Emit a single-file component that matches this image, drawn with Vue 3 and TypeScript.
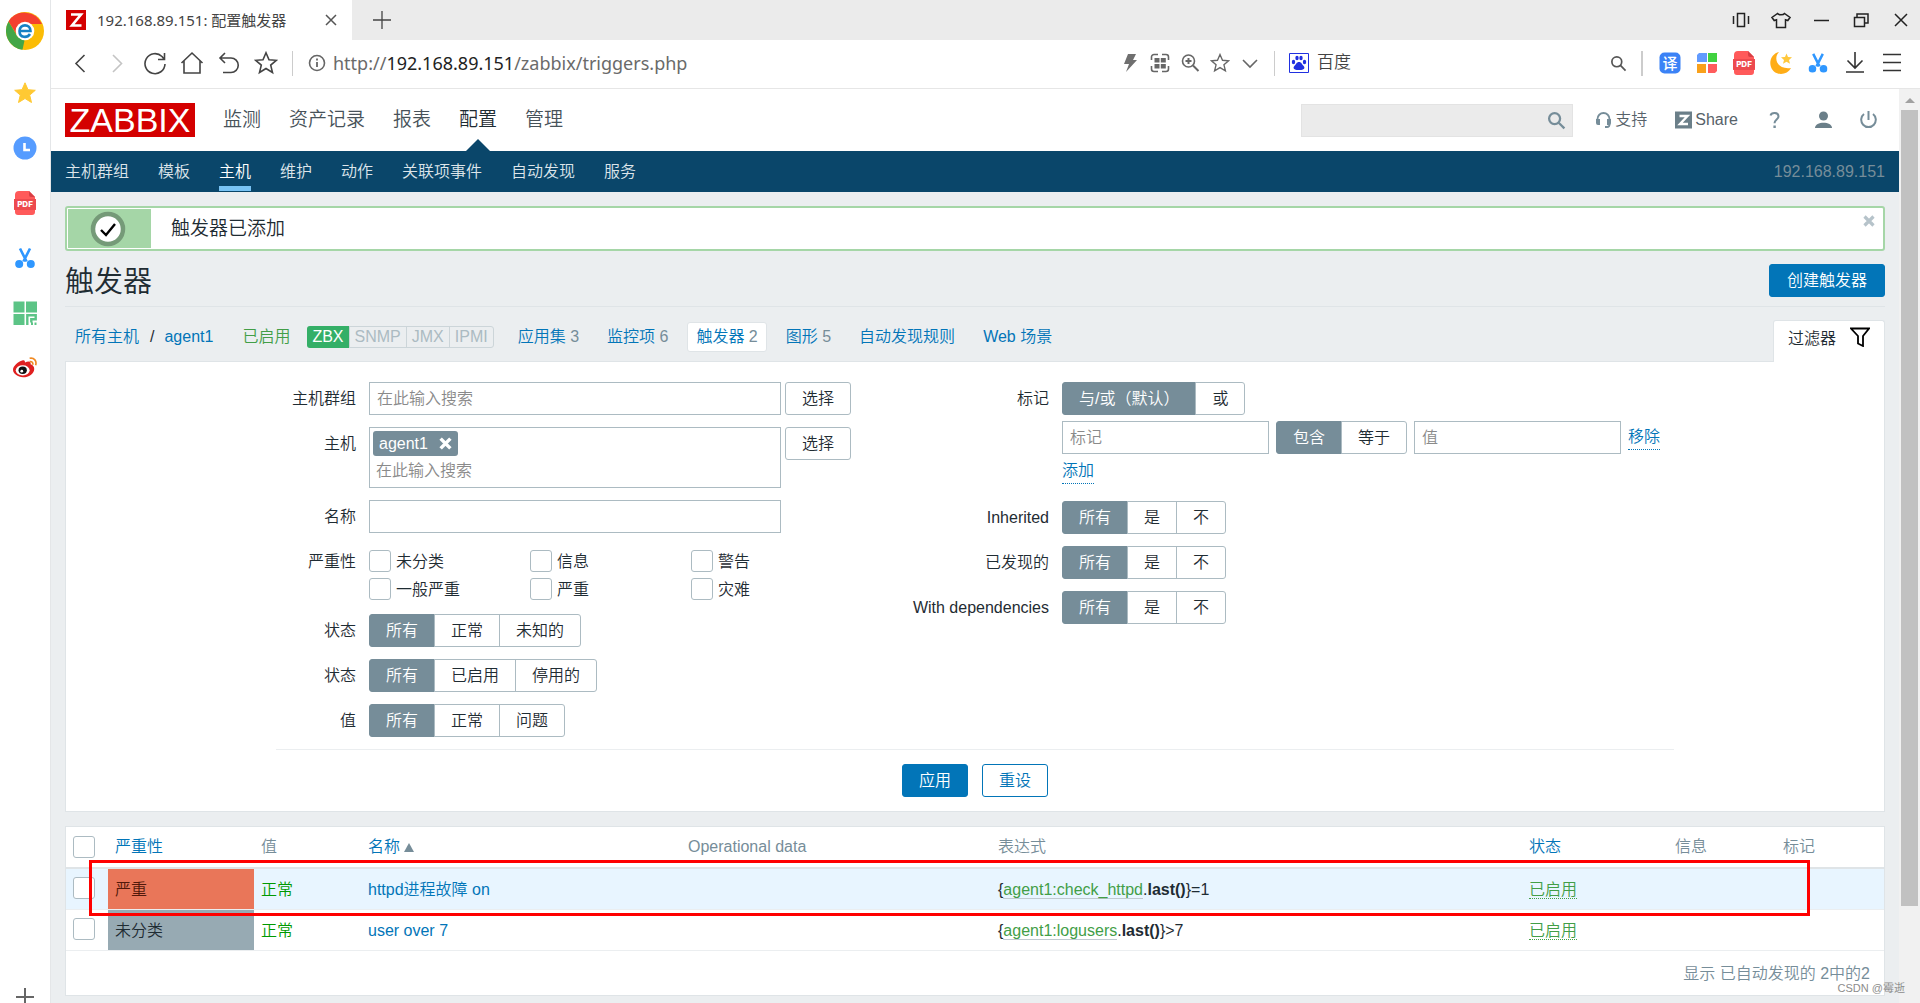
<script setup lang="ts">
import { ref } from 'vue'

interface Segment {
  id: string
  label: string
  options: string[]
}
interface Trigger {
  id: number
  level: 'high' | 'none'
  severity: string
  name: string
  item: string
  tail: string
  active: boolean
}

const mainMenu = ['监测', '资产记录', '报表', '配置', '管理']
const subMenu = ['主机群组', '模板', '主机', '维护', '动作', '关联项事件', '自动发现', '服务']
const interfaces = ['ZBX', 'SNMP', 'JMX', 'IPMI']
const hostTabs = [
  { label: '应用集', count: '3' },
  { label: '监控项', count: '6' },
  { label: '触发器', count: '2' },
  { label: '图形', count: '5' },
  { label: '自动发现规则', count: '' },
  { label: 'Web 场景', count: '' },
]
const severities = ['未分类', '信息', '警告', '一般严重', '严重', '灾难']
const leftSegments: Segment[] = [
  { id: 'state', label: '状态', options: ['所有', '正常', '未知的'] },
  { id: 'status', label: '状态', options: ['所有', '已启用', '停用的'] },
  { id: 'value', label: '值', options: ['所有', '正常', '问题'] },
]
const rightSegments: Segment[] = [
  { id: 'inherited', label: 'Inherited', options: ['所有', '是', '不'] },
  { id: 'discovered', label: '已发现的', options: ['所有', '是', '不'] },
  { id: 'dependent', label: 'With dependencies', options: ['所有', '是', '不'] },
]
const triggers: Trigger[] = [
  { id: 1, level: 'high', severity: '严重', name: 'httpd进程故障 on', item: 'agent1:check_httpd', tail: '=1', active: true },
  { id: 2, level: 'none', severity: '未分类', name: 'user over 7', item: 'agent1:logusers', tail: '>7', active: false },
]
const selected = ref<Record<string, string>>({
  state: '所有',
  status: '所有',
  value: '所有',
  inherited: '所有',
  discovered: '所有',
  dependent: '所有',
  evaltype: '与/或（默认）',
  operator: '包含',
})
const messageOpen = ref(true)
</script>

<template>
  <div class="browser">
    <svg class="defs" aria-hidden="true">
      <symbol id="i-star" viewBox="0 0 24 24">
        <path d="M12 1.8l3 6.9 7.3.6-5.6 4.8 1.8 7.4L12 17.500l-6.500 4 1.800-7.400L1.700 9.300 9 8.700z" />
      </symbol>
      <symbol id="i-pdf" viewBox="0 0 24 24">
        <path d="M6 0h10l6 6v4h1v9h-1v2a3 3 0 0 1-3 3H5a3 3 0 0 1-3-3v-2H1V8h1V4a4 4 0 0 1 4-4z" fill="#ff5a5a" />
        <path d="M16 0l6 6h-4a2 2 0 0 1-2-2z" fill="#d93f45" />
        <path d="M1 8h22v9a2 2 0 0 1-2 2H3a2 2 0 0 1-2-2z" fill="#ed4a4e" />
      </symbol>
      <symbol id="i-cut" viewBox="0 0 20 21">
        <path d="M5 1l6.600 13M15 1L8.400 14" stroke="#2f97ff" stroke-width="2.600" fill="none" />
        <circle cx="4.200" cy="16.500" r="4" fill="#2f97ff" /><circle cx="15.800" cy="16.500" r="4" fill="#2f97ff" />
      </symbol>
      <symbol id="i-search" viewBox="0 0 20 20">
        <circle cx="8" cy="8" r="5.800" fill="none" stroke="currentColor" /><path d="M12.300 12.300l6 6" stroke="currentColor" />
      </symbol>
      <symbol id="i-cross" viewBox="0 0 12 12">
        <path d="M1.500 1.500l9 9M10.500 1.500l-9 9" stroke="currentColor" stroke-width="3.200" />
      </symbol>
    </svg>

    <aside class="dock">
      <svg class="chrome" viewBox="0 0 38 38">
        <circle cx="19" cy="19" r="19" fill="#fbbc05" />
        <path d="M2.500 9.500A19 19 0 0 1 36 12H19a9 9 0 0 0-8 11z" fill="#f4402f" />
        <path d="M2.500 9.500l9 15 7 4L16.500 37.800A19 19 0 0 1 2.500 9.500z" fill="#43a647" />
        <circle cx="19" cy="19" r="9.300" fill="#fff" />
        <path d="M13.500 19h11c0-7.500-11-7.500-11 0s8 7 10.500 3" fill="none" stroke="#1581c4" stroke-width="2.600" />
      </svg>
      <svg class="dock-icon" fill="#ffc933" stroke="#ffc933"><use href="#i-star" /></svg>
      <svg class="dock-icon" viewBox="0 0 24 24"><circle cx="12" cy="12" r="11.500" fill="#569cff" /><path d="M11.500 7v7H17" fill="none" stroke="#fff" stroke-width="2.600" /></svg>
      <svg class="dock-icon" viewBox="0 0 24 24"><use href="#i-pdf" /><text class="pdf-text" x="12" y="16">PDF</text></svg>
      <svg class="dock-icon small"><use href="#i-cut" /></svg>
      <svg class="dock-icon" viewBox="0 0 24 24">
        <path d="M.5.500h11v11H.5zM13 .500h11v11H13zM.5 13h11v11H.5z" fill="#5cc486" />
        <path d="M14.300 24V14.300h8.400v4h-4.400v3.200M18 22.800h2M21.500 22.800h2" fill="none" stroke="#5cc486" stroke-width="2.400" />
      </svg>
      <svg class="dock-icon" viewBox="0 0 26 24">
        <path d="M10 4c2-1 3 0 3 2 4-2 7-1 6 2 3 1 4 3 4 5 0 5-6 9-12 9S0 18 0 14 6 5 10 4z" fill="#e02020" />
        <ellipse cx="10.500" cy="14.500" rx="7.500" ry="5.500" fill="#fff" /><ellipse cx="10.500" cy="14.500" rx="4.500" ry="4" fill="#111" /><circle cx="9.500" cy="15.500" r="1.500" fill="#fff" />
        <path d="M18 1.500c5-1 8 3 6.500 7.500M18 5c2.500-.5 4 1.500 3.300 3.500" fill="none" stroke="#f08a24" stroke-width="1.800" />
      </svg>
      <button class="dock-add" aria-label="添加"><svg viewBox="0 0 18 18"><path d="M9 0v18M0 9h18" stroke="#666" stroke-width="2" /></svg></button>
    </aside>

    <div class="window">
      <div class="tabs">
        <div class="tab">
          <svg class="favicon" viewBox="0 0 20 20"><path d="M0 0h20v20H0z" fill="#d40000" /><path d="M5 4.500h10L6 15.500h9.500" fill="none" stroke="#fff" stroke-width="2.600" /></svg>
          <span class="tab-title">192.168.89.151: 配置触发器</span>
          <svg class="tab-close" viewBox="0 0 12 12"><path d="M1 1l10 10M11 1L1 11" stroke="#555" stroke-width="1.500" /></svg>
        </div>
        <svg class="tab-new" viewBox="0 0 18 18"><path d="M9 0v18M0 9h18" stroke="#444" stroke-width="1.300" /></svg>
        <div class="controls">
          <svg viewBox="0 0 20 20"><path d="M6.500 3.500h7v13h-7zM2.500 6v8M17.500 6v8" /></svg>
          <svg viewBox="0 0 20 20"><path d="M6.500 3.500c1 1.600 6 1.600 7 0l5.500 4-2.200 3-2.300-.8v7.800h-9V9.700l-2.300.8-2.200-3z" /></svg>
          <svg viewBox="0 0 20 20"><path d="M3 10.500h15" /></svg>
          <svg viewBox="0 0 20 20"><path d="M3.500 7.500h10v9h-10zM6 7V4h11v9h-3" /></svg>
          <svg viewBox="0 0 20 20"><path d="M4 4l12 12M16 4L4 16" /></svg>
        </div>
      </div>

      <div class="address">
        <div class="nav-icons">
          <svg viewBox="0 0 24 24"><path d="M15.500 4l-8.500 8.500 8.500 8.500" /></svg>
          <svg class="faint" viewBox="0 0 24 24"><path d="M7 4l8.500 8.500L7 21" /></svg>
          <svg viewBox="0 0 24 24"><path d="M22 13a10 10 0 1 1-3-7.500L21 8M21.500 2v6.500H15" /></svg>
          <svg viewBox="0 0 24 24"><path d="M1.500 12L12 2l10.500 10M4 10v12h16V10" /></svg>
          <svg viewBox="0 0 24 24"><path d="M8 2L3 7l5 5M3 7h11a7 7 0 0 1 0 14.500H6" /></svg>
          <svg viewBox="0 0 24 24"><use href="#i-star" /></svg>
        </div>
        <i class="sep"></i>
        <svg class="info" viewBox="0 0 18 18"><circle cx="9" cy="9" r="7.500" fill="none" stroke="#666" stroke-width="1.600" /><path d="M9 8v5M9 4.500v2" stroke="#666" stroke-width="1.800" /></svg>
        <div class="url">http://<span>192.168.89.151</span>/zabbix/triggers.php</div>
        <div class="page-icons">
          <svg viewBox="0 0 20 20"><path d="M8 1h8l-3 6h4L6 19l3-8H4z" fill="#6f6f6f" stroke="none" /></svg>
          <svg viewBox="0 0 20 20"><path d="M1.500 7V4a2.500 2.500 0 0 1 2.500-2.500h4M12 1.500h4A2.500 2.500 0 0 1 18.500 4v3M18.500 13v3a2.500 2.500 0 0 1-2.500 2.500h-4M8 18.500H4A2.500 2.500 0 0 1 1.500 16v-3" /><path d="M4.500 5h5v4.500h-5zM10.800 5h5v4.500h-5zM4.500 11h5v4.500h-5zM10.800 11h5v4.500h-5z" fill="#666" stroke="none" /></svg>
          <svg viewBox="0 0 20 20"><circle cx="8.500" cy="8" r="6" /><path d="M13 12.500l5.500 5.500M8.500 5v6M5.500 8h6" stroke-width="2" /></svg>
          <svg viewBox="0 0 20 20"><use href="#i-star" /></svg>
          <svg viewBox="0 0 20 20"><path d="M3 7l7 7 7-7" /></svg>
        </div>
        <div class="bookmarks">
          <i class="sep"></i>
          <svg class="baidu" viewBox="0 0 20 20"><path d="M.5.500h19v19H.5z" fill="#fff" stroke="#2030e0" /><ellipse cx="4.500" cy="9" rx="1.700" ry="2.200" fill="#2030e0" /><ellipse cx="8" cy="5" rx="1.700" ry="2.300" fill="#2030e0" /><ellipse cx="12" cy="5" rx="1.700" ry="2.300" fill="#2030e0" /><ellipse cx="15.500" cy="9" rx="1.700" ry="2.200" fill="#2030e0" /><path d="M10 9c2.500 0 3 2.500 4.500 3.800 2.500 3-.5 4.500-4.500 4.200-4 .3-7-1.200-4.500-4.200C7 11.500 7.500 9 10 9z" fill="#2030e0" /></svg>
          <span>百度</span>
        </div>
        <svg class="go"><use href="#i-search" /></svg>
        <i class="sep thick"></i>
        <div class="ext-icons">
          <svg viewBox="0 0 24 24"><rect x="1.500" y="1.500" width="21" height="21" rx="5" fill="#3b82f6" /><text x="12" y="18" text-anchor="middle" font-family="Noto Sans CJK SC, sans-serif" font-size="15" font-weight="500" fill="#fff">译</text></svg>
          <svg viewBox="0 0 24 24"><path d="M4 2h8v9H2V4z" fill="#629bff" /><path d="M13 2h9v9h-9z" fill="#41d240" /><path d="M2 13h9v9H2z" fill="#f9a11b" /><path d="M13 13h9v7l-2 2h-7z" fill="#ff5c5c" /></svg>
          <svg viewBox="0 0 24 24"><use href="#i-pdf" /><text class="pdf-text" x="12" y="16">PDF</text></svg>
          <svg viewBox="0 0 24 24"><path d="M10 1C4 7 8 19 22 17 18 25 5 25 2 16-.5 9 4 2 10 1z" fill="#ffad17" /><path d="M17.500 2.500l1.500 3.500 4 .3-3 2.600 1 3.800-3.500-2-3.500 2 1-3.800-3-2.600 4-.3z" fill="#ffc83c" /></svg>
          <svg viewBox="-2 -2 24 25"><use href="#i-cut" width="20" height="21" /></svg>
          <svg class="line" viewBox="0 0 24 24"><path d="M12 1v16M4.500 9.500L12 17l7.500-7.500M3 21h18" /></svg>
          <svg class="line" viewBox="0 0 24 24"><path d="M3 3.500h18M3 11.500h18M3 19.500h18" /></svg>
        </div>
      </div>

      <div class="viewport">
        <div class="zabbix">
          <header class="top">
            <a class="logo" href="#">ZABBIX</a>
            <nav class="main-menu">
              <a v-for="m in mainMenu" :key="m" href="#" :class="{ on: m === '配置' }">{{ m }}</a>
            </nav>
            <form class="search" @submit.prevent>
              <input type="text" aria-label="搜索" />
              <button type="submit" aria-label="搜索"><svg><use href="#i-search" /></svg></button>
            </form>
            <nav class="tools">
              <a href="#"><svg viewBox="0 0 17 18"><path d="M2.500 12V8a6 6 0 0 1 12 0v5.500a2.500 2.500 0 0 1-2.500 2.500h-2" fill="none" stroke="#768d99" stroke-width="1.800" /><path d="M1 8h4v6H3a2 2 0 0 1-2-2zM12 8h4v4a2 2 0 0 1-2 2h-2z" fill="#768d99" /></svg>支持</a>
              <a href="#"><svg viewBox="0 0 17 17"><path d="M0 0h17v17H0z" fill="#6b7f89" /><path d="M4.500 4.500h8l-7.500 8h8" fill="none" stroke="#fff" stroke-width="2.400" /></svg>Share</a>
              <a href="#" aria-label="帮助"><svg viewBox="0 0 17 18"><path d="M4.500 4.500c1-3.500 8-3.500 8 .8 0 3.200-4 3.200-4 7" fill="none" stroke="#768d99" stroke-width="2" /><path d="M7.400 14.500h2.400V17H7.400z" fill="#768d99" /></svg></a>
              <a class="account" href="#" aria-label="用户"><svg viewBox="0 0 17 18"><circle cx="8.500" cy="5" r="4.500" fill="#6b7f89" /><path d="M0 17c0-7 17-7 17 0z" fill="#6b7f89" /></svg></a>
              <a href="#" aria-label="退出"><svg viewBox="0 0 17 18"><path d="M4 3a7.300 7.300 0 1 0 9 0M8.500 0v9" fill="none" stroke="#768d99" stroke-width="2" /></svg></a>
            </nav>
          </header>
          <nav class="sub-menu">
            <a v-for="m in subMenu" :key="m" href="#" :class="{ on: m === '主机' }">{{ m }}</a>
            <span class="server">192.168.89.151</span>
          </nav>

          <main class="content">
            <div v-if="messageOpen" class="message" role="status">
              <div class="message-mark">
                <svg viewBox="0 0 36 36"><circle cx="18" cy="18" r="15" fill="#fff" stroke="#759a78" stroke-width="4.500" /><path d="M11 19l5 5 9-11" fill="none" stroke="#000" stroke-width="2.400" /></svg>
              </div>
              <span>触发器已添加</span>
              <button class="message-close" aria-label="关闭" @click="messageOpen = false"><svg><use href="#i-cross" /></svg></button>
            </div>

            <div class="title-row">
              <h1>触发器</h1>
              <button class="primary">创建触发器</button>
            </div>

            <div class="host-row">
              <a href="#">所有主机</a><span class="slash">/</span><a href="#">agent1</a>
              <span class="enabled">已启用</span>
              <span class="ifaces"><span v-for="i in interfaces" :key="i" :class="{ up: i === 'ZBX' }">{{ i }}</span></span>
              <nav class="host-tabs">
                <a v-for="t in hostTabs" :key="t.label" href="#" :class="{ on: t.label === '触发器' }">{{ t.label }}<span v-if="t.count">&nbsp;{{ t.count }}</span></a>
              </nav>
              <a class="filter-tab" href="#">过滤器<svg viewBox="0 0 20 20"><path d="M1 1.500h18l-6 7.500v10l-5-2.500V9z" fill="none" stroke="#000" stroke-width="1.800" /></svg></a>
            </div>

            <form class="filter" @submit.prevent>
              <div class="columns">
                <div class="form left">
                  <div class="row">
                    <label for="groups">主机群组</label>
                    <div class="field"><input id="groups" class="text wide" type="text" placeholder="在此输入搜索" /><button type="button" class="plain">选择</button></div>
                  </div>
                  <div class="row">
                    <label for="hosts">主机</label>
                    <div class="field">
                      <div class="multi wide">
                        <span class="chip">agent1<button type="button" aria-label="移除 agent1"><svg><use href="#i-cross" /></svg></button></span>
                        <input id="hosts" type="text" placeholder="在此输入搜索" />
                      </div>
                      <button type="button" class="plain">选择</button>
                    </div>
                  </div>
                  <div class="row">
                    <label for="name">名称</label>
                    <div class="field"><input id="name" class="text wide" type="text" /></div>
                  </div>
                  <div class="row">
                    <span class="label">严重性</span>
                    <div class="severities">
                      <label v-for="s in severities" :key="s"><input type="checkbox" /><span>{{ s }}</span></label>
                    </div>
                  </div>
                  <div v-for="s in leftSegments" :key="s.id" class="row">
                    <span class="label">{{ s.label }}</span>
                    <div class="segments">
                      <label v-for="o in s.options" :key="o"><input v-model="selected[s.id]" type="radio" :name="s.id" :value="o" /><span>{{ o }}</span></label>
                    </div>
                  </div>
                </div>

                <div class="form right">
                  <div class="row">
                    <span class="label">标记</span>
                    <div class="tags">
                      <div class="segments">
                        <label v-for="o in ['与/或（默认）', '或']" :key="o"><input v-model="selected.evaltype" type="radio" name="evaltype" :value="o" /><span>{{ o }}</span></label>
                      </div>
                      <div class="tag-line">
                        <input class="text" type="text" placeholder="标记" aria-label="标记" />
                        <div class="segments">
                          <label v-for="o in ['包含', '等于']" :key="o"><input v-model="selected.operator" type="radio" name="operator" :value="o" /><span>{{ o }}</span></label>
                        </div>
                        <input class="text" type="text" placeholder="值" aria-label="值" />
                        <button type="button" class="dotted">移除</button>
                      </div>
                      <button type="button" class="dotted">添加</button>
                    </div>
                  </div>
                  <div v-for="s in rightSegments" :key="s.id" class="row">
                    <span class="label">{{ s.label }}</span>
                    <div class="segments">
                      <label v-for="o in s.options" :key="o"><input v-model="selected[s.id]" type="radio" :name="s.id" :value="o" /><span>{{ o }}</span></label>
                    </div>
                  </div>
                </div>
              </div>
              <div class="actions">
                <button type="submit" class="primary">应用</button>
                <button type="reset" class="outline">重设</button>
              </div>
            </form>

            <div class="list">
              <table>
                <colgroup>
                  <col class="c-check" /><col class="c-sev" /><col class="c-value" /><col class="c-name" /><col class="c-data" /><col /><col class="c-sev" /><col class="c-info" /><col class="c-info" />
                </colgroup>
                <thead>
                  <tr>
                    <th><input type="checkbox" aria-label="全选" /></th>
                    <th><a href="#">严重性</a></th>
                    <th>值</th>
                    <th><a href="#">名称<i class="asc"></i></a></th>
                    <th>Operational data</th>
                    <th>表达式</th>
                    <th><a href="#">状态</a></th>
                    <th>信息</th>
                    <th>标记</th>
                  </tr>
                </thead>
                <tbody>
                  <tr v-for="t in triggers" :key="t.id" :class="{ hover: t.active }">
                    <td><input type="checkbox" :aria-label="t.name" /></td>
                    <td :class="t.level">{{ t.severity }}</td>
                    <td class="ok">正常</td>
                    <td><a href="#">{{ t.name }}</a></td>
                    <td></td>
                    <td>{<a class="item" href="#">{{ t.item }}</a>.<b>last()</b>}{{ t.tail }}</td>
                    <td><a class="state" href="#">已启用</a></td>
                    <td></td>
                    <td></td>
                  </tr>
                </tbody>
              </table>
              <div class="total">显示 已自动发现的 2中的2</div>
              <div class="highlight"></div>
            </div>
          </main>
        </div>
        <div class="scrollbar"><i class="arrow"></i><i class="thumb"></i><i class="rest"></i></div>
      </div>
    </div>
    <div class="watermark">CSDN @霉逝</div>
  </div>
</template>

<style>
body {
  margin: 0;
  overflow: hidden;
}
</style>

<style scoped>
* {
  box-sizing: border-box;
}
.browser {
  position: relative;
  display: flex;
  height: 100vh;
  overflow: hidden;
  background: #fff;
  color: #1f2c33;
  font: 350 16px/24px "Liberation Sans", "Noto Sans CJK SC", sans-serif;
}
a {
  color: #0275b8;
  text-decoration: none;
}
b {
  font-weight: 700;
}
button,
input {
  font: inherit;
  margin: 0;
}
button {
  padding: 0;
  border: 0;
  background: none;
  color: inherit;
}
svg {
  display: block;
  flex: none;
}
.defs {
  position: absolute;
  width: 0;
  height: 0;
}
.pdf-text {
  fill: #fff;
  font: 800 8px Inter, sans-serif;
  text-anchor: middle;
}

/* Side dock */
.dock {
  display: flex;
  flex: none;
  flex-direction: column;
  align-items: center;
  width: 51px;
  padding-top: 12px;
  border-right: 1px solid #e4e6e8;
}
.chrome {
  width: 38px;
  height: 38px;
}
.dock-icon {
  width: 24px;
  height: 24px;
  margin-top: 31px;
}
.dock-icon.small {
  width: 20px;
}
.dock-add {
  margin: auto 0 -3px;
}
.dock-add svg {
  width: 18px;
  height: 18px;
}

/* Browser chrome */
.window {
  display: flex;
  flex: 1;
  flex-direction: column;
  min-width: 0;
}
.tabs {
  display: flex;
  flex: none;
  align-items: center;
  height: 40px;
  background: #ebebeb;
}
.tab {
  display: flex;
  align-items: center;
  width: 301px;
  height: 40px;
  padding: 0 15px;
  background: #fff;
}
.favicon {
  width: 20px;
  height: 20px;
  margin-right: 11px;
}
.tab-title {
  flex: 1;
  font: 15px/24px "Noto Sans", "Noto Sans CJK SC", sans-serif;
  color: #444;
  white-space: nowrap;
}
.tab-close {
  width: 12px;
  height: 12px;
}
.tab-new {
  width: 18px;
  height: 18px;
  margin-left: 21px;
}
.controls {
  display: flex;
  gap: 20px;
  margin-left: auto;
  padding-right: 9px;
}
.controls svg {
  width: 20px;
  height: 20px;
  fill: none;
  stroke: #222;
  stroke-width: 1.5;
}
.address {
  display: flex;
  flex: none;
  align-items: center;
  height: 49px;
  padding-bottom: 2px;
  border-bottom: 1px solid #e6e6e6;
}
.nav-icons {
  display: flex;
  gap: 13px;
  padding: 0 14px 0 18px;
}
.nav-icons svg {
  width: 24px;
  height: 24px;
  fill: none;
  stroke: #444;
  stroke-width: 1.6;
}
.nav-icons .faint {
  stroke: #c4c4c4;
}
.sep {
  width: 1px;
  height: 25px;
  background: #ccc;
}
.sep.thick {
  width: 2px;
}
.info {
  width: 18px;
  height: 18px;
  margin: 0 7px 0 15px;
}
.url {
  flex: 1;
  font: 18px/24px "Noto Sans", sans-serif;
  color: #6a6a6a;
  white-space: nowrap;
}
.url span {
  color: #222;
}
.page-icons {
  display: flex;
  gap: 10px;
  padding-right: 14px;
}
.page-icons svg {
  width: 20px;
  height: 20px;
  fill: none;
  stroke: #666;
  stroke-width: 1.6;
}
.bookmarks {
  display: flex;
  align-items: center;
  width: 336px;
  font-size: 17px;
  color: #444;
}
.baidu {
  width: 20px;
  height: 20px;
  margin: 0 8px 0 14px;
}
.go {
  width: 17px;
  height: 17px;
  margin-right: 14px;
  color: #555;
  stroke-width: 2;
}
.ext-icons {
  display: flex;
  gap: 13px;
  padding: 0 16px 0 15px;
}
.ext-icons svg {
  width: 24px;
  height: 24px;
}
.ext-icons .line {
  fill: none;
  stroke: #333;
  stroke-width: 1.6;
}

/* Page frame */
.viewport {
  display: flex;
  flex: 1;
  min-height: 0;
}
.zabbix {
  flex: 1;
  min-width: 0;
  background: #ebeef0;
}
.scrollbar {
  display: flex;
  flex: none;
  flex-direction: column;
  width: 21px;
  padding: 0 2px;
  background: #f1f1f1;
}
.arrow {
  height: 21px;
}
.arrow::before {
  content: "";
  display: block;
  width: 0;
  margin: 9px auto 0;
  border: 5px solid transparent;
  border-top: 0;
  border-bottom-color: #a0a0a0;
}
.thumb {
  flex: 796;
  background: #c1c1c1;
}
.rest {
  flex: 97;
}
.top {
  display: flex;
  align-items: center;
  height: 62px;
  padding: 0 22px 0 14px;
  background: #fff;
}
.logo {
  width: 130px;
  height: 34px;
  margin-right: 28px;
  background: #d40000;
  color: #fff;
  font-size: 34px;
  line-height: 34px;
  text-align: center;
}
.main-menu {
  display: flex;
  gap: 28px;
  height: 62px;
}
.main-menu a {
  position: relative;
  color: #475259;
  font-size: 19px;
  line-height: 62px;
}
.main-menu .on {
  color: #1f2c33;
}
.main-menu .on::after {
  content: "";
  position: absolute;
  bottom: 0;
  left: 50%;
  margin-left: -12px;
  border: 12px solid transparent;
  border-top: 0;
  border-bottom-color: #0a466a;
}
.search {
  display: flex;
  align-items: center;
  width: 272px;
  height: 33px;
  margin-left: auto;
  border: 1px solid #e3e3e3;
  background: #ebebeb;
}
.search input {
  flex: 1;
  min-width: 0;
  border: 0;
  background: none;
}
.search button {
  padding-right: 6px;
  color: #768d99;
}
.search svg {
  width: 19px;
  height: 19px;
  stroke-width: 2.4;
}
.tools {
  display: flex;
  gap: 28px;
  padding-left: 22px;
}
.tools a {
  display: flex;
  align-items: center;
  gap: 3px;
  color: #576269;
}
.tools .account {
  margin-left: 4px;
}
.tools svg {
  width: 17px;
  height: 18px;
}
.sub-menu {
  display: flex;
  gap: 29px;
  height: 41px;
  padding: 0 14px;
  background: #0a466a;
}
.sub-menu a {
  height: 40px;
  color: #dde5ea;
  line-height: 42px;
}
.sub-menu .on {
  border-bottom: 5px solid #79c3f4;
  color: #fff;
}
.server {
  margin-left: auto;
  color: #768d99;
  line-height: 42px;
}
.content {
  padding: 14px 14px 7px;
}
.message {
  display: flex;
  align-items: center;
  height: 45px;
  padding: 1px;
  border: 2px solid #a5d6a7;
  border-radius: 3px;
  background: #fff;
  font-size: 19px;
}
.message-mark {
  display: flex;
  align-items: center;
  width: 83px;
  height: 39px;
  margin-right: 20px;
  padding-left: 22px;
  background: #a5d6a7;
}
.message-mark svg {
  width: 36px;
  height: 36px;
}
.message-close {
  align-self: flex-start;
  margin: 6px 7px 0 auto;
  color: #b6c3ca;
}
.message-close svg {
  width: 12px;
  height: 12px;
}
.title-row {
  display: flex;
  align-items: center;
  justify-content: space-between;
  height: 56px;
  padding-top: 3px;
  border-bottom: 1px solid #dfe4e7;
}
h1 {
  margin: 0;
  padding-top: 4px;
  font-size: 29px;
  font-weight: inherit;
  line-height: 40px;
}
.primary,
.outline,
.plain {
  height: 33px;
  padding: 0 16px;
  border: 1px solid #0275b8;
  border-radius: 3px;
  line-height: 31px;
}
.primary {
  background: #0275b8;
  color: #fff;
}
.title-row .primary {
  padding: 0 17px;
}
.outline {
  background: #fff;
  color: #0275b8;
}
.plain {
  border-color: #acbbc2;
  background: #fff;
  color: #1f2c33;
}
.host-row {
  display: flex;
  align-items: center;
  height: 54px;
  padding: 6px 0 0 10px;
}
.slash {
  margin: 0 10px 0 11px;
}
.enabled {
  margin: 0 17px 0 29px;
  color: #429e47;
}
.ifaces {
  display: flex;
  border: 1px solid #ccd5d9;
  border-radius: 3px;
  color: #acbbc2;
  line-height: 20px;
}
.ifaces span {
  padding: 0 5px;
  border-left: 1px solid #ccd5d9;
}
.ifaces .up {
  margin: -1px 0 -1px -1px;
  padding: 1px 5px;
  border: 0;
  border-radius: 3px 0 0 3px;
  background: #34af67;
  color: #fff;
}
.host-tabs {
  display: flex;
  gap: 10px;
  margin-left: 15px;
}
.host-tabs a {
  padding: 2px 8px;
  border: 1px solid transparent;
  border-radius: 3px;
}
.host-tabs .on {
  border-color: #dfe4e7;
  background: #fff;
}
.host-tabs span {
  color: #768d99;
}
.filter-tab {
  position: relative;
  display: flex;
  align-self: flex-end;
  justify-content: space-between;
  width: 112px;
  height: 42px;
  margin: 0 0 -1px auto;
  padding: 6px 14px 0;
  border: 1px solid #dfe4e7;
  border-bottom: 0;
  border-radius: 3px 3px 0 0;
  background: #fff;
  color: #1f2c33;
}
.filter-tab svg {
  width: 20px;
  height: 20px;
}

/* Filter */
.filter {
  height: 451px;
  padding-top: 20px;
  border: 1px solid #dfe4e7;
  background: #fff;
}
.columns {
  display: flex;
  max-width: 1398px;
  margin: 0 auto;
  padding-bottom: 12px;
  border-bottom: 1px solid #ebeef0;
}
.form {
  display: flex;
  flex-direction: column;
  gap: 12px;
}
.row {
  display: flex;
  gap: 13px;
}
.row > label,
.row > .label {
  flex: none;
  width: 80px;
  line-height: 33px;
  text-align: right;
}
.right .row > .label {
  width: 197px;
}
.field {
  display: flex;
  align-items: flex-start;
  gap: 4px;
}
.text {
  width: 207px;
  height: 33px;
  padding: 0 7px;
  border: 1px solid #acbbc2;
  background: #fff;
}
.wide {
  width: 412px;
}
::placeholder {
  color: #8a8a8a;
}
.multi {
  height: 61px;
  padding: 3px;
  border: 1px solid #acbbc2;
}
.multi input {
  display: block;
  width: 100%;
  height: 30px;
  padding: 0 3px;
  border: 0;
  background: none;
}
.chip {
  display: flex;
  align-items: center;
  gap: 11px;
  width: max-content;
  height: 25px;
  padding: 0 6px;
  border-radius: 3px;
  background: #768d99;
  color: #fff;
}
.chip svg {
  width: 13px;
  height: 13px;
}
.severities {
  display: grid;
  grid-template-columns: repeat(3, 161px);
  row-gap: 4px;
  padding: 4px 0 1px;
}
.severities label {
  display: flex;
  align-items: center;
  gap: 5px;
  height: 24px;
}
.severities span {
  padding-top: 2px;
}
input[type="checkbox"] {
  display: block;
  width: 22px;
  height: 22px;
  appearance: none;
  border: 1px solid #acbbc2;
  border-radius: 3px;
  background: #fff;
}
.segments {
  display: flex;
}
.segments label {
  position: relative;
  margin-left: -1px;
}
.segments label:first-child {
  margin-left: 0;
}
.segments input {
  position: absolute;
  inset: 0;
  margin: 0;
  opacity: 0;
}
.segments span {
  display: block;
  height: 33px;
  padding: 0 16px;
  border: 1px solid #acbbc2;
  line-height: 31px;
}
.segments label:first-child span {
  border-radius: 3px 0 0 3px;
}
.segments label:last-child span {
  border-radius: 0 3px 3px 0;
}
.segments input:checked + span {
  border-color: #768d99;
  background: #768d99;
  color: #fff;
}
.tags {
  display: flex;
  flex-direction: column;
  align-items: flex-start;
  height: 107px;
}
.tag-line {
  display: flex;
  align-items: center;
  gap: 7px;
  margin: 6px 0 5px;
}
.dotted {
  border-bottom: 1px dotted #0275b8;
  color: #0275b8;
}
.actions {
  display: flex;
  justify-content: center;
  gap: 14px;
  padding-top: 14px;
}

/* Trigger list */
.list {
  position: relative;
  margin-top: 14px;
  border: 1px solid #dfe4e7;
  background: #fff;
}
table {
  width: 100%;
  border-spacing: 0;
  table-layout: fixed;
}
.c-check {
  width: 42px;
}
.c-sev {
  width: 146px;
}
.c-value {
  width: 107px;
}
.c-name {
  width: 320px;
}
.c-data {
  width: 310px;
}
.c-info {
  width: 108px;
}
th,
td {
  height: 41px;
  padding: 1px 7px 0;
  border-bottom: 1px solid #ebeef0;
  text-align: left;
  white-space: nowrap;
}
th {
  height: 42px;
  padding: 0 7px 1px;
  border-bottom: 2px solid #dfe4e7;
  color: #768d99;
  font-weight: inherit;
}
td:first-child {
  padding: 0 7px 2px;
}
.hover td {
  background: #e8f5ff;
}
.list .high {
  background: #e97659;
  color: #52190b;
}
.list .none {
  background: #97aab3;
}
.ok {
  color: #090;
}
.asc {
  display: inline-block;
  margin-left: 4px;
  border: 5px solid transparent;
  border-top: 0;
  border-bottom: 9px solid #768d99;
}
.item {
  border-bottom: 1px solid #c0cad0;
  color: #429e47;
}
.state {
  border-bottom: 1px dotted #429e47;
  color: #429e47;
}
.total {
  height: 44px;
  padding-right: 14px;
  color: #768d99;
  line-height: 46px;
  text-align: right;
}
.highlight {
  position: absolute;
  top: 33px;
  right: 74px;
  left: 23px;
  height: 56px;
  border: 3px solid #f00;
}
.watermark {
  position: absolute;
  right: 15px;
  bottom: 5px;
  color: #8c8c8c;
  font-size: 11px;
  font-weight: 400;
  line-height: 20px;
}
</style>
